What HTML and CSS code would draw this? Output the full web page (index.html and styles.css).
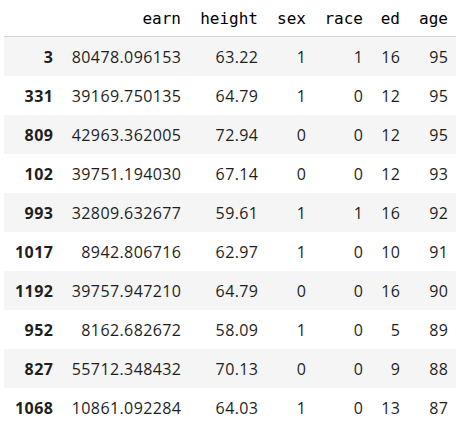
FILE: index.html
```html
<!DOCTYPE html>
<html>
<head>
<meta charset="utf-8">
<link rel="stylesheet" href="styles.css">
</head>
<body>
<table class="df">
<colgroup>
<col class="c-idx"><col class="c-earn"><col class="c-height"><col class="c-sex"><col class="c-race"><col class="c-ed"><col class="c-age">
</colgroup>
<thead>
<tr><th></th><th>earn</th><th>height</th><th>sex</th><th>race</th><th>ed</th><th>age</th></tr>
</thead>
<tbody>
<tr><th>3</th><td>80478.096153</td><td>63.22</td><td>1</td><td>1</td><td>16</td><td>95</td></tr>
<tr><th>331</th><td>39169.750135</td><td>64.79</td><td>1</td><td>0</td><td>12</td><td>95</td></tr>
<tr><th>809</th><td>42963.362005</td><td>72.94</td><td>0</td><td>0</td><td>12</td><td>95</td></tr>
<tr><th>102</th><td>39751.194030</td><td>67.14</td><td>0</td><td>0</td><td>12</td><td>93</td></tr>
<tr><th>993</th><td>32809.632677</td><td>59.61</td><td>1</td><td>1</td><td>16</td><td>92</td></tr>
<tr><th>1017</th><td>8942.806716</td><td>62.97</td><td>1</td><td>0</td><td>10</td><td>91</td></tr>
<tr><th>1192</th><td>39757.947210</td><td>64.79</td><td>0</td><td>0</td><td>16</td><td>90</td></tr>
<tr><th>952</th><td>8162.682672</td><td>58.09</td><td>1</td><td>0</td><td>5</td><td>89</td></tr>
<tr><th>827</th><td>55712.348432</td><td>70.13</td><td>0</td><td>0</td><td>9</td><td>88</td></tr>
<tr><th>1068</th><td>10861.092284</td><td>64.03</td><td>1</td><td>0</td><td>13</td><td>87</td></tr>
</tbody>
</table>
</body>
</html>
```

FILE: styles.css
```css
html, body {
  margin: 0;
  padding: 0;
  background: #fff;
}
body {
  padding: 0 4px;
}
.df {
  border-collapse: collapse;
  table-layout: fixed;
  width: 452px;
  font-family: "Open Sans", "Noto Sans", sans-serif;
  font-size: 16px;
  color: #1e1e1e;
}
.c-idx { width: 57px; }
.c-earn { width: 128px; }
.c-height { width: 77px; }
.c-sex { width: 48px; }
.c-race { width: 57px; }
.c-ed { width: 37px; }
.c-age { width: 48px; }
.df th, .df td {
  text-align: right;
  padding: 0 8px;
  white-space: nowrap;
}
.df tbody td {
  letter-spacing: 0.4px;
  padding-right: 7.6px;
}
.df thead th {
  font-family: "DejaVu Sans Mono", monospace;
  font-weight: normal;
  color: #000;
  height: 36px;
  border-bottom: 1px solid #d4d4d4;
  vertical-align: middle;
}
.df tbody th, .df tbody td {
  height: 39px;
  vertical-align: middle;
}
.df tbody th {
  font-weight: bold;
  letter-spacing: 0.5px;
  padding-right: 7.5px;
}
.df tbody tr:nth-child(odd) {
  background: #f5f5f5;
}
```
